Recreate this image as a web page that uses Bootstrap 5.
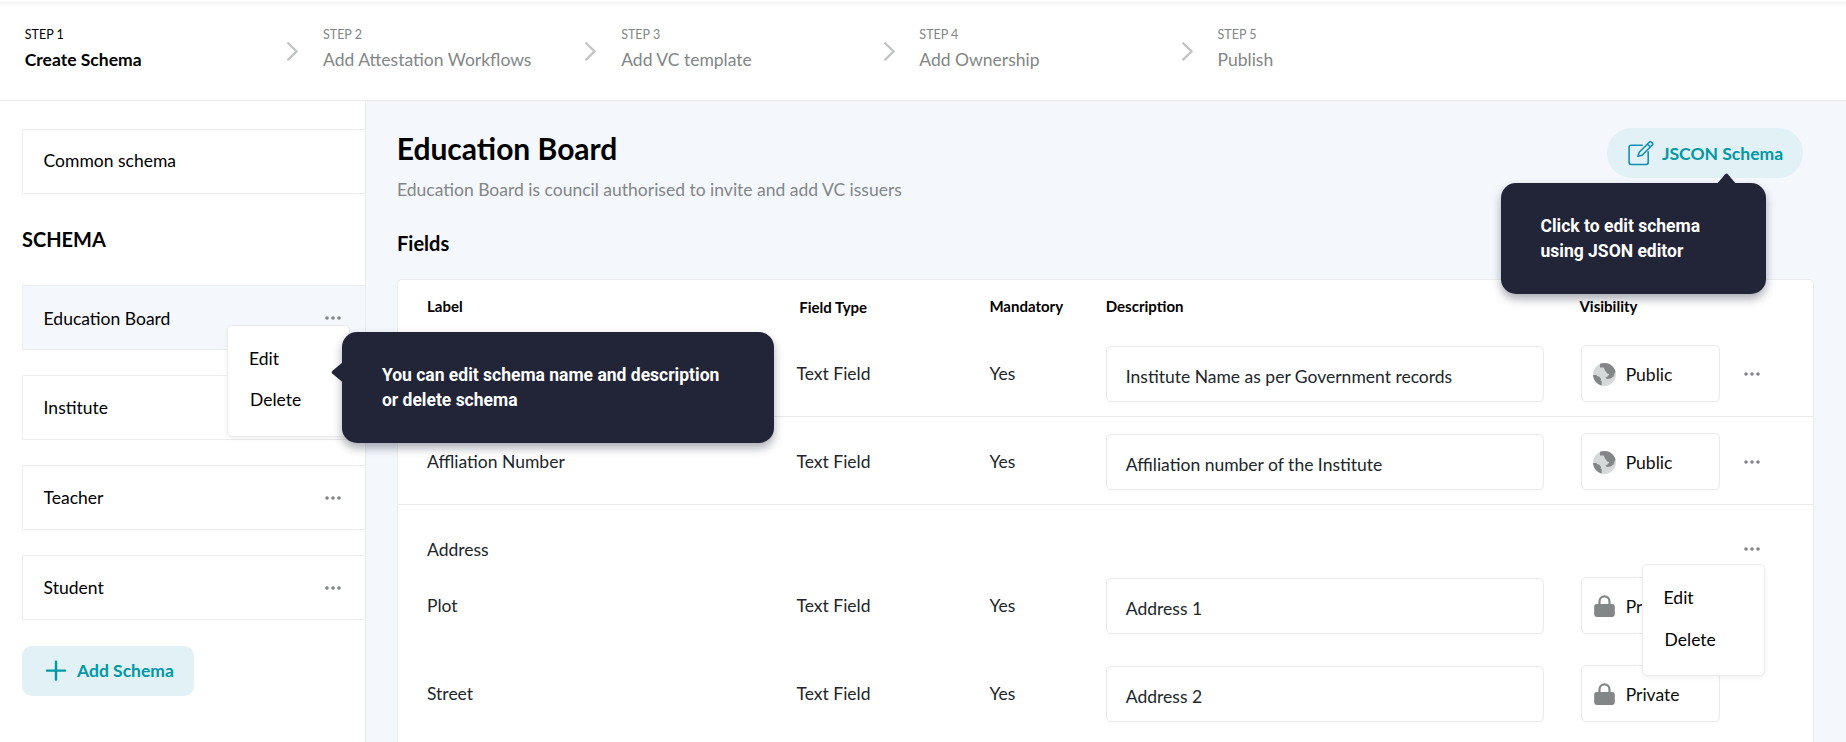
<!DOCTYPE html>
<html lang="en">
<head>
<meta charset="utf-8">
<meta name="viewport" content="width=device-width, initial-scale=1">
<title>Create Schema</title>
<link href="https://cdn.jsdelivr.net/npm/bootstrap@5.3.0/dist/css/bootstrap.min.css" rel="stylesheet">
<style>
  :root { --line: #ededee; --teal: #0098a6; --mist: #e2f1f6; --canvas: #f4f7fc; --navy: #222437; --muted: #828686; }
  body { font-family: Lato, "Liberation Sans", sans-serif; font-size: 17.5px; line-height: 25px; color: #000; height: 742px; overflow: hidden; }
  svg { display: block; flex: none; }

  .stepper { height: 101px; border-bottom: 1px solid #eaeaeb; background: linear-gradient(#fff 1px, #f3f3f3 2px, #f5f5f5 3px, #fff 7px); }
  .step { width: 298.2px; padding: 27px 0 0 24.8px; color: var(--muted); }
  .step.current { color: #000; }
  .step.current .step-name { font-weight: 700; }
  .step-no { font-size: 12.5px; line-height: 15px; margin-bottom: 5px; }
  .step-name { white-space: nowrap; }
  .step svg { margin-top: 15px; }

  .shell { height: 641px; }
  .side { width: 366px; padding: 28px 0 0 22px; border-right: 1px solid #ececee; z-index: 3; flex: none; }
  .schema-list { gap: 25px; }
  .schema-item { height: 65px; border: 1px solid var(--line); border-right: 0; padding: 19px 24.5px 0 20.6px; }
  .schema-item > svg { margin-top: 11px; }
  .schema-item.common { padding-top: 18px; }
  .schema-item.active { background: var(--canvas); padding-top: 20px; z-index: 2; }
  .schema-item.active > svg { margin-top: 9.5px; }
  .side-title { font-size: 20px; line-height: 24px; margin: 33px 0 34px; }
  .btn-soft { background: var(--mist); color: var(--teal); font-size: 17.5px; line-height: 25px; font-weight: 700; border: 0; height: 50px; padding: 0; text-align: left; }
  .btn-soft:hover { background: var(--mist); color: var(--teal); }
  .btn-add { width: 172px; margin-top: 26px; border-radius: 10px; padding: 12px 0 13px 24px; }
  .btn-add svg { margin-right: 9px; }
  .btn-json { width: 195.5px; margin: -2px 43.5px 0 0; border-radius: 25px; padding: 13px 0 12px 21px; white-space: nowrap; }
  .btn-json svg { margin: -1px 8px 0 0; }

  .menu-pop { position: absolute; width: 123px; height: 112px; background: #fff; border: 1px solid #ececee; border-radius: 5px; box-shadow: 0 2px 5px rgba(0,0,0,.05); padding: 20px 0 0 21px; z-index: 2; }
  .menu-pop div + div { margin: 16px 0 0 1px; }
  .side .menu-pop { left: 204px; top: 39px; }
  .group-head .menu-pop { left: 1243.6px; top: 59px; }
  .group-head .menu-pop div + div { margin-top: 17px; }

  .tip { position: absolute; background: var(--navy); color: #fff; font-family: Roboto, sans-serif; font-weight: 700; border-radius: 15px; height: 111px; padding: 31px 40px 0; box-shadow: 0 5px 10px rgba(34,36,60,.38); white-space: nowrap; z-index: 5; }
  .tip svg { position: absolute; }
  .tip-side { width: 432px; left: 318.9px; top: 46px; }
  .tip-side svg { left: -11px; top: 30px; }
  .tip-json { width: 265.7px; left: -106.5px; top: 53px; }
  .tip-json svg { left: 215px; top: -10.5px; }

  .board { background: var(--canvas); padding: 29px 0 0 31px; }
  .board h1 { font-size: 30px; line-height: 36px; font-weight: 700; margin: 0 0 11px -.3px; }
  .board h2 { font-size: 20px; line-height: 24px; font-weight: 700; margin: 29px 0 24px; }
  .board .about { color: var(--muted); }
  .fields { width: 1416.5px; height: 463px; background: #fff; border: 1px solid var(--line); border-bottom: 0; border-radius: 5px 5px 0 0; }
  .heads { font-size: 15px; line-height: 18px; font-weight: 700; height: 49px; padding: 17px 0 0 29px; }
  .heads div { flex: none; }
  .frow { height: 88px; padding-left: 29px; color: #20262a; }
  .frow.ruled { border-bottom: 1px solid #eaeaeb; }
  .frow > * { flex: none; }
  .frow .txt { padding-top: 32px; }
  .c-label { width: 369.5px; } .c-type { width: 193px; } .c-mand { width: 116.3px; }
  .h-label { width: 372.2px; } .h-type { width: 190.2px; padding-top: 1px; } .h-mand { width: 116.4px; } .h-desc { width: 473.7px; }
  .desc { width: 438.2px; height: 56px; margin: 17px 37.2px 0 0; border: 1px solid #e9eaea; border-radius: 5px; padding: 17px 0 0 19px; }
  .vis { width: 138.8px; height: 57px; margin-top: 16px; border: 1px solid #e9eaea; border-radius: 5px; padding: 16px 0 0 11px; color: #0c0c0c; }
  .vis svg { margin: 1px 9.5px 0 0; }
  .more { margin: 42.5px 0 0 24.3px; }
  .group-head { height: 56px; padding: 32px 0 0 29px; color: #20262a; }
  .group-head .more { margin: 10px 0 0 1229.3px; }
  .group-head .name { width: 88px; flex: none; }
  .group-head .menu-pop { color: #000; }
</style>
</head>
<body>
<svg width="0" height="0" class="position-absolute">
  <defs>
    <symbol id="dots" viewBox="0 0 16 4"><g fill="#828686"><circle cx="2" cy="2" r="1.8"/><circle cx="8" cy="2" r="1.8"/><circle cx="14" cy="2" r="1.8"/></g></symbol>
    <symbol id="chev" viewBox="0 0 11 19"><path d="M1.2 1.2 L9.6 9.4 L1.2 17.6" fill="none" stroke="#c3c5c5" stroke-width="2.3" stroke-linecap="round" stroke-linejoin="round"/></symbol>
    <symbol id="globe" viewBox="0 0 23 23"><clipPath id="disc"><circle cx="11.5" cy="11.5" r="11.4"/></clipPath><g clip-path="url(#disc)"><path fill="#d5d8d8" d="M0 0h23v23H0z"/><path fill="#828686" d="M7 0 L18 0 L23 8 L21.5 10.5 L20.5 13.5 L17.5 15.5 L14 16 L12.3 14.6 L15 13.2 L16.2 11 L14.3 10.6 L12.4 8 L10.6 4.6 L7 4.6 Z M0 12 L3.4 12 L4 13 L6 13.4 L8.2 16.3 L7.6 17.6 L8.8 18.6 L8.6 23 L0 23 Z"/></g></symbol>
    <symbol id="lock" viewBox="0 0 23 23"><rect x="1.2" y="9" width="20.6" height="13" rx="2.4" fill="#828686"/><path d="M6.5 11 V6.4 a5 5 0 0 1 10 0 V11" fill="none" stroke="#828686" stroke-width="2.2"/></symbol>
  </defs>
</svg>

<header class="stepper d-flex">
  <div class="step current d-flex justify-content-between"><div><div class="step-no">STEP 1</div><div class="step-name">Create Schema</div></div><svg width="11" height="19"><use href="#chev"/></svg></div>
  <div class="step d-flex justify-content-between"><div><div class="step-no">STEP 2</div><div class="step-name">Add Attestation Workflows</div></div><svg width="11" height="19"><use href="#chev"/></svg></div>
  <div class="step d-flex justify-content-between"><div><div class="step-no">STEP 3</div><div class="step-name">Add VC template</div></div><svg width="11" height="19"><use href="#chev"/></svg></div>
  <div class="step d-flex justify-content-between"><div><div class="step-no">STEP 4</div><div class="step-name">Add Ownership</div></div><svg width="11" height="19"><use href="#chev"/></svg></div>
  <div class="step"><div class="step-no">STEP 5</div><div class="step-name">Publish</div></div>
</header>

<div class="shell d-flex">
  <aside class="side position-relative bg-white">
    <div class="schema-item common">Common schema</div>
    <div class="side-title fw-bold">SCHEMA</div>
    <div class="schema-list d-flex flex-column">
      <div class="schema-item active d-flex justify-content-between position-relative">
        <span>Education Board</span><svg width="16" height="4"><use href="#dots"/></svg>
        <div class="menu-pop"><div>Edit</div><div>Delete</div></div>
        <div class="tip tip-side"><svg width="12" height="21" viewBox="0 0 12 21"><path fill="#222437" d="M12 0 L1.2 9 Q0 10.3 1.2 11.6 L12 20.6Z"/></svg>You can edit schema name and description<br>or delete schema</div>
      </div>
      <div class="schema-item">Institute</div>
      <div class="schema-item d-flex justify-content-between"><span>Teacher</span><svg width="16" height="4"><use href="#dots"/></svg></div>
      <div class="schema-item d-flex justify-content-between"><span>Student</span><svg width="16" height="4"><use href="#dots"/></svg></div>
    </div>
    <button class="btn btn-soft btn-add d-flex">
      <svg width="22" height="25" viewBox="0 0 22 25"><path d="M1 12.6 H19 M10 3.6 V21.6" stroke="#0098a6" stroke-width="2.4" stroke-linecap="round"/></svg>Add Schema
    </button>
  </aside>

  <main class="board flex-grow-1">
    <div class="d-flex justify-content-between">
      <div>
        <h1>Education Board</h1>
        <div class="about">Education Board is council authorised to invite and add VC issuers</div>
      </div>
      <div class="position-relative z-3">
        <button class="btn btn-soft btn-json d-flex">
          <svg width="26" height="26" viewBox="0 0 26 26"><g fill="none" stroke="#128fb8" stroke-width="1.6" stroke-linecap="round" stroke-linejoin="round"><path d="M14.2 5.2 H3 a1.9 1.9 0 0 0 -1.9 1.9 V22.6 a1.9 1.9 0 0 0 1.9 1.9 H18.3 a1.9 1.9 0 0 0 1.9 -1.9 V11.8"/><path d="M9.9 16.2 L11.2 12.2 L21.2 2.2 Q22.3 1.1 23.4 2.2 L24.3 3.1 Q25.2 4.1 24.3 5 L14.1 15.2 Z M19.4 4 L22.4 7"/></g></svg>JSCON Schema
        </button>
        <div class="tip tip-json"><svg width="21" height="12" viewBox="0 0 21 12"><path fill="#222437" d="M0 12 L9.2 1.2 Q10.5 0 11.8 1.2 L21 12Z"/></svg>Click to edit schema<br>using JSON editor</div>
      </div>
    </div>
    <h2>Fields</h2>
    <section class="fields">
      <div class="heads d-flex"><div class="h-label">Label</div><div class="h-type">Field Type</div><div class="h-mand">Mandatory</div><div class="h-desc">Description</div><div>Visibility</div></div>
      <div class="frow ruled d-flex"><div class="txt c-label"></div><div class="txt c-type">Text Field</div><div class="txt c-mand">Yes</div><div class="desc">Institute Name as per Government records</div><div class="vis d-flex"><svg width="23" height="23"><use href="#globe"/></svg>Public</div><svg class="more" width="16" height="4"><use href="#dots"/></svg></div>
      <div class="frow ruled d-flex"><div class="txt c-label">Affliation Number</div><div class="txt c-type">Text Field</div><div class="txt c-mand">Yes</div><div class="desc">Affiliation number of the Institute</div><div class="vis d-flex"><svg width="23" height="23"><use href="#globe"/></svg>Public</div><svg class="more" width="16" height="4"><use href="#dots"/></svg></div>
      <div class="group-head d-flex position-relative"><span class="name">Address</span><svg class="more" width="16" height="4"><use href="#dots"/></svg>
        <div class="menu-pop"><div>Edit</div><div>Delete</div></div></div>
      <div class="frow d-flex"><div class="txt c-label">Plot</div><div class="txt c-type">Text Field</div><div class="txt c-mand">Yes</div><div class="desc">Address 1</div><div class="vis d-flex"><svg width="23" height="23"><use href="#lock"/></svg>Private</div></div>
      <div class="frow d-flex"><div class="txt c-label">Street</div><div class="txt c-type">Text Field</div><div class="txt c-mand">Yes</div><div class="desc">Address 2</div><div class="vis d-flex"><svg width="23" height="23"><use href="#lock"/></svg>Private</div></div>
    </section>
  </main>
</div>
<script src="https://cdn.jsdelivr.net/npm/bootstrap@5.3.0/dist/js/bootstrap.bundle.min.js"></script>
</body>
</html>
